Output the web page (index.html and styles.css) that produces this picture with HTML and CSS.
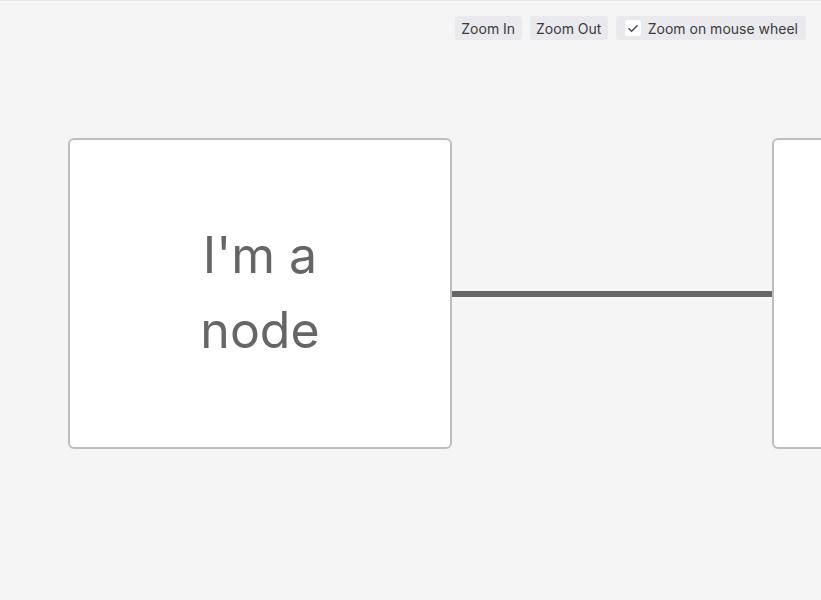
FILE: index.html
```html
<!DOCTYPE html>
<html>
<head>
<meta charset="utf-8">
<link rel="stylesheet" href="styles.css">
</head>
<body>
<div class="canvas">
  <div class="edge"></div>
  <div class="node node-a"><span>I'm a<br>node</span></div>
  <div class="node node-b"></div>
</div>
<div class="toolbar">
  <button class="btn btn-in">Zoom In</button>
  <button class="btn btn-out">Zoom Out</button>
  <label class="btn check">
    <span class="box"><svg width="14" height="14" viewBox="0 0 14 14"><path d="M2.5 7.3 L5.6 10.3 L11.5 4.2" fill="none" stroke="#444" stroke-width="1.3"/></svg></span>
    Zoom on mouse wheel
  </label>
</div>
</body>
</html>
```
FILE: styles.css
```css
html, body {
  margin: 0;
  padding: 0;
}
body {
  width: 821px;
  height: 600px;
  overflow: hidden;
  background: #f5f5f5;
  border-top: 1px solid #e6e6e6;
  box-sizing: border-box;
  position: relative;
  font-family: Inter, "Noto Sans", sans-serif;
}
.toolbar {
  position: absolute;
  top: 15px;
  right: 15px;
  display: flex;
  gap: 8px;
}
.btn {
  height: 24px;
  box-sizing: border-box;
  padding: 0 8px;
  border: none;
  border-radius: 3px;
  background: #eaeaee;
  color: #3a3a3a;
  font-family: Inter, "Noto Sans", sans-serif;
  font-size: 14px;
  display: flex;
  align-items: center;
  justify-content: center;
  gap: 7px;
}
.btn-in {
  width: 67px;
  padding: 0;
}
.btn-out {
  width: 78px;
  padding: 0;
}
.check {
  padding-left: 9px;
}
.box {
  width: 16px;
  height: 16px;
  background: #fff;
  border-radius: 3px;
  display: flex;
  align-items: center;
  justify-content: center;
}
.canvas {
  position: absolute;
  inset: 0;
}
.node {
  position: absolute;
  box-sizing: border-box;
  background: #fff;
  border: 2px solid #bdbdbd;
  border-radius: 6px;
  display: flex;
  align-items: center;
  justify-content: center;
  text-align: center;
  color: #666;
  font-size: 50px;
  line-height: 75px;
}
.node-a {
  left: 68px;
  top: 137px;
  width: 384px;
  height: 311px;
  padding-bottom: 1px;
}
.node-b {
  left: 772px;
  top: 137px;
  width: 384px;
  height: 311px;
}
.edge {
  position: absolute;
  left: 450px;
  top: 290px;
  width: 324px;
  height: 6px;
  background: #666;
}
```
